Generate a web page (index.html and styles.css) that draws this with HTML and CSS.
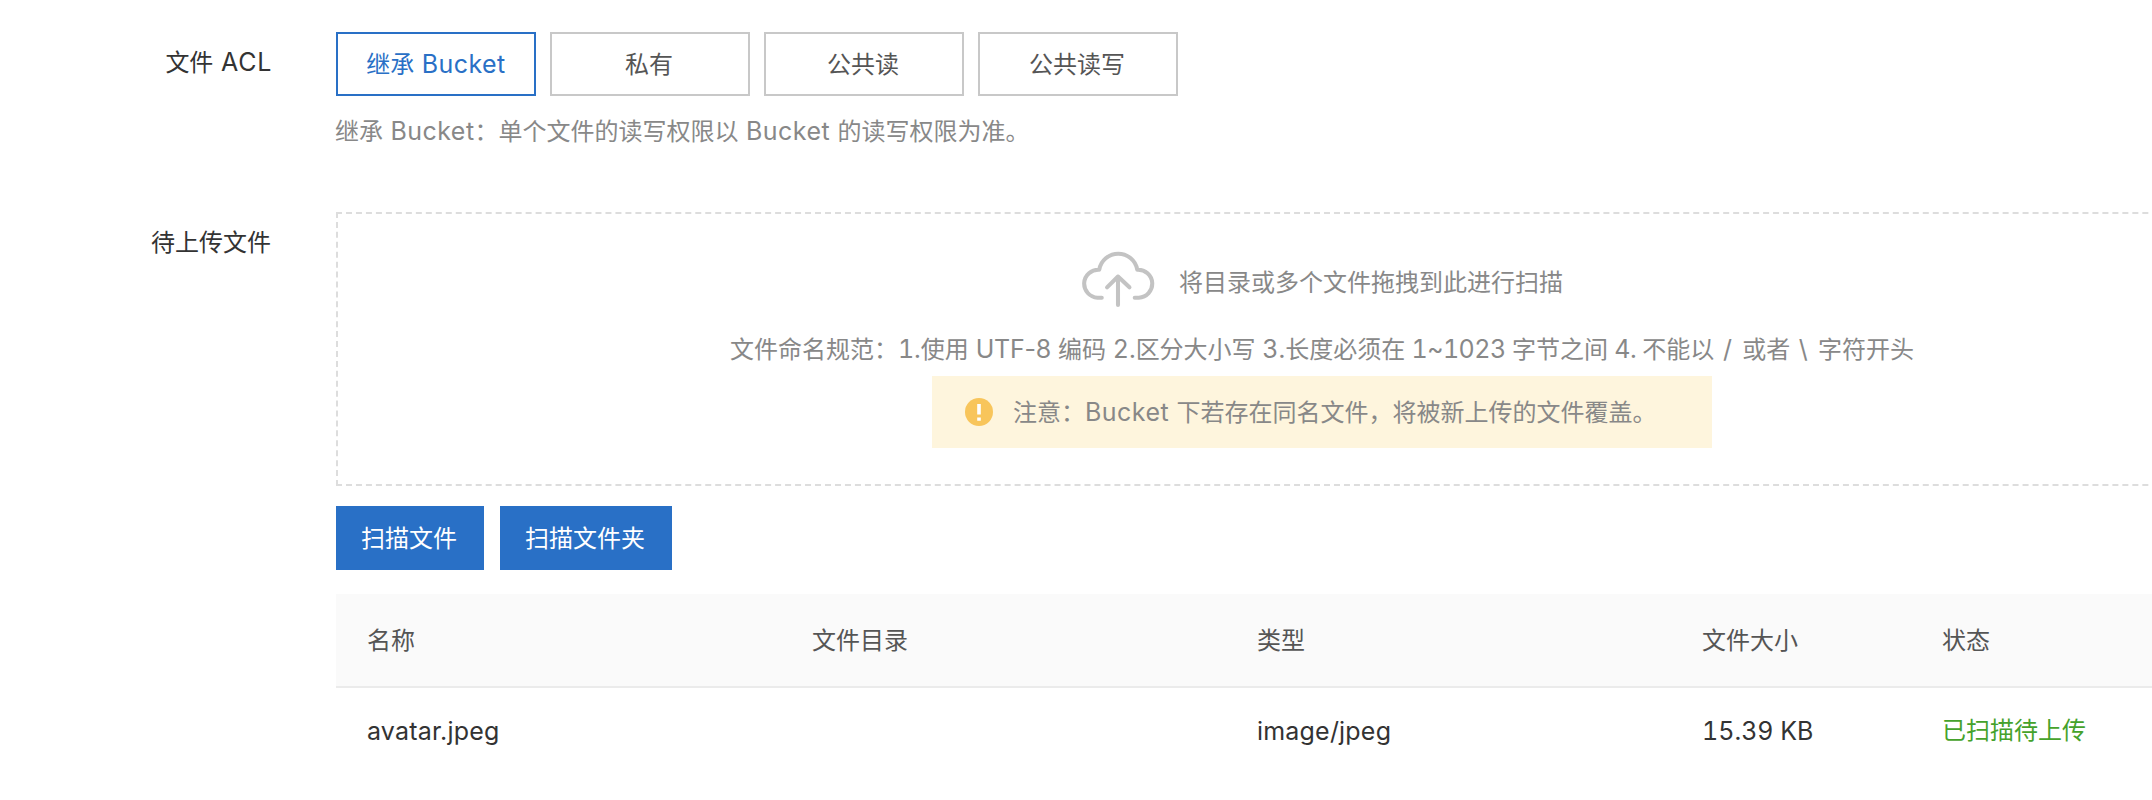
FILE: index.html
```html
<!DOCTYPE html>
<html lang="zh-CN">
<head>
<meta charset="utf-8">
<title>上传文件</title>
<link rel="stylesheet" href="styles.css">
</head>
<body>
<main class="form">
  <section class="field field-acl">
    <div class="label">文件<span class="en"> ACL</span></div>
    <div class="control">
      <div class="options">
        <button class="option option-active">继承<span class="en"> Bucket</span></button>
        <button class="option">私有</button>
        <button class="option">公共读</button>
        <button class="option">公共读写</button>
      </div>
      <p class="hint">继承<span class="en"> Bucket</span>：单个文件的读写权限以<span class="en"> Bucket </span>的读写权限为准。</p>
    </div>
  </section>
  <section class="field">
    <div class="label label-files">待上传文件</div>
    <div class="control">
      <div class="dropzone">
        <div class="drop-title">
          <svg class="cloud" viewBox="0 0 73 58" preserveAspectRatio="none" fill="none" stroke="#c3c3c3" stroke-width="4" stroke-linecap="round" stroke-linejoin="round">
            <path d="M20.500 47.700H16.300A14 14 0 0 1 18 19.700A19 19 0 0 1 55.500 19.700A14 14 0 0 1 57 47.700H53"/>
            <path d="M36.500 55V26.500M25.700 37.300L36.500 26.500L47.800 37.300"/>
          </svg>
          <span class="drop-text">将目录或多个文件拖拽到此进行扫描</span>
        </div>
        <p class="rules">文件命名规范：<span class="en num">1.</span>使用<span class="en code"> UTF-8 </span>编码<span class="en num"> 2.</span>区分大小写<span class="en num"> 3.</span>长度必须在<span class="en num range"> 1~1023 </span>字节之间<span class="en num range"> 4. </span>不能以<span class="en slash"> / </span>或者<span class="en slash"> \ </span>字符开头</p>
        <div class="notice">
          <svg class="warn" viewBox="0 0 28 28">
            <circle cx="14" cy="14" r="14" fill="#f8c55b"/>
            <path d="M12.200 6h3.600v10.500h-3.600zM12.200 19.500h3.600v3.200h-3.600z" fill="#fff"/>
          </svg>
          <span class="notice-text">注意：<span class="en">Bucket </span>下若存在同名文件，将被新上传的文件覆盖。</span>
        </div>
      </div>
      <div class="actions">
        <button class="action">扫描文件</button>
        <button class="action">扫描文件夹</button>
      </div>
      <div class="table">
        <div class="row head"><span>名称</span><span>文件目录</span><span>类型</span><span>文件大小</span><span>状态</span></div>
        <div class="row"><span class="en">avatar.jpeg</span><span></span><span class="en">image/jpeg</span><span class="en num">15.39 KB</span><span class="status">已扫描待上传</span></div>
      </div>
    </div>
  </section>
</main>
</body>
</html>
```
FILE: styles.css
```css
* { box-sizing: border-box; }
body {
  margin: 0;
  height: 800px;
  overflow: hidden;
  background: #fff;
  color: #333;
  font: 24px/36px Inter, "Noto Sans CJK SC", sans-serif;
  white-space: nowrap;
}
p { margin: 0; }
button { font: inherit; padding: 0; }
.en { font-size: 25px; line-height: 1; letter-spacing: 0.45px; }
.num { letter-spacing: 0; font-variant-numeric: tabular-nums; }
.code { letter-spacing: -0.2px; }
.range { letter-spacing: -0.5px; }
.slash { letter-spacing: 1.6px; }
.form { padding-top: 32px; overflow: hidden; }
.field { display: flex; }
.field-acl { height: 180px; }
.label { width: 272px; margin-right: 64px; padding-top: 13px; text-align: right; flex: none; }
.label .en { letter-spacing: 0.7px; }
.label-files { padding-right: 1px; }
.control { width: 1972px; flex: none; }
.options { display: flex; gap: 14px; }
.option { width: 200px; height: 64px; padding: 2px 2px 0 0; border: 2px solid #c8c8c8; background: #fff; color: #555; }
.option-active { padding-right: 0; border-color: #2970c6; color: #2970c6; }
.hint { padding-top: 18px; margin-left: -1px; color: #888; }
.dropzone {
  height: 274px;
  border: 2px dashed #ddd;
  display: flex;
  flex-direction: column;
  align-items: center;
  color: #888;
}
.drop-title { display: flex; align-items: flex-start; gap: 24px; height: 77px; margin-top: 36px; }
.cloud { width: 74px; height: 58px; }
.drop-text { padding-top: 15px; }
.rules { height: 49px; padding-top: 5px; }
.notice { width: 780px; height: 72px; padding: 0 33px; display: flex; align-items: center; gap: 20px; background: #fef5dd; }
.notice-text { padding-top: 2px; }
.warn { width: 28px; height: 28px; }
.actions { display: flex; gap: 16px; padding: 20px 0 24px; }
.action { height: 64px; padding: 2px 27px 0 25px; border: 0; background: #2970c6; color: #fff; }
.row { display: grid; grid-template-columns: 445px 445px 445px 240px 1fr; height: 88px; align-items: center; padding: 0 0 2px 31px; }
.row .en { letter-spacing: 0.2px; }
.row .num { letter-spacing: 0; }
.head { height: 94px; padding: 2px 0 0 31px; background: #fafafa; border-bottom: 2px solid #ebebeb; color: #555; }
.status { color: #45a22b; }
```
